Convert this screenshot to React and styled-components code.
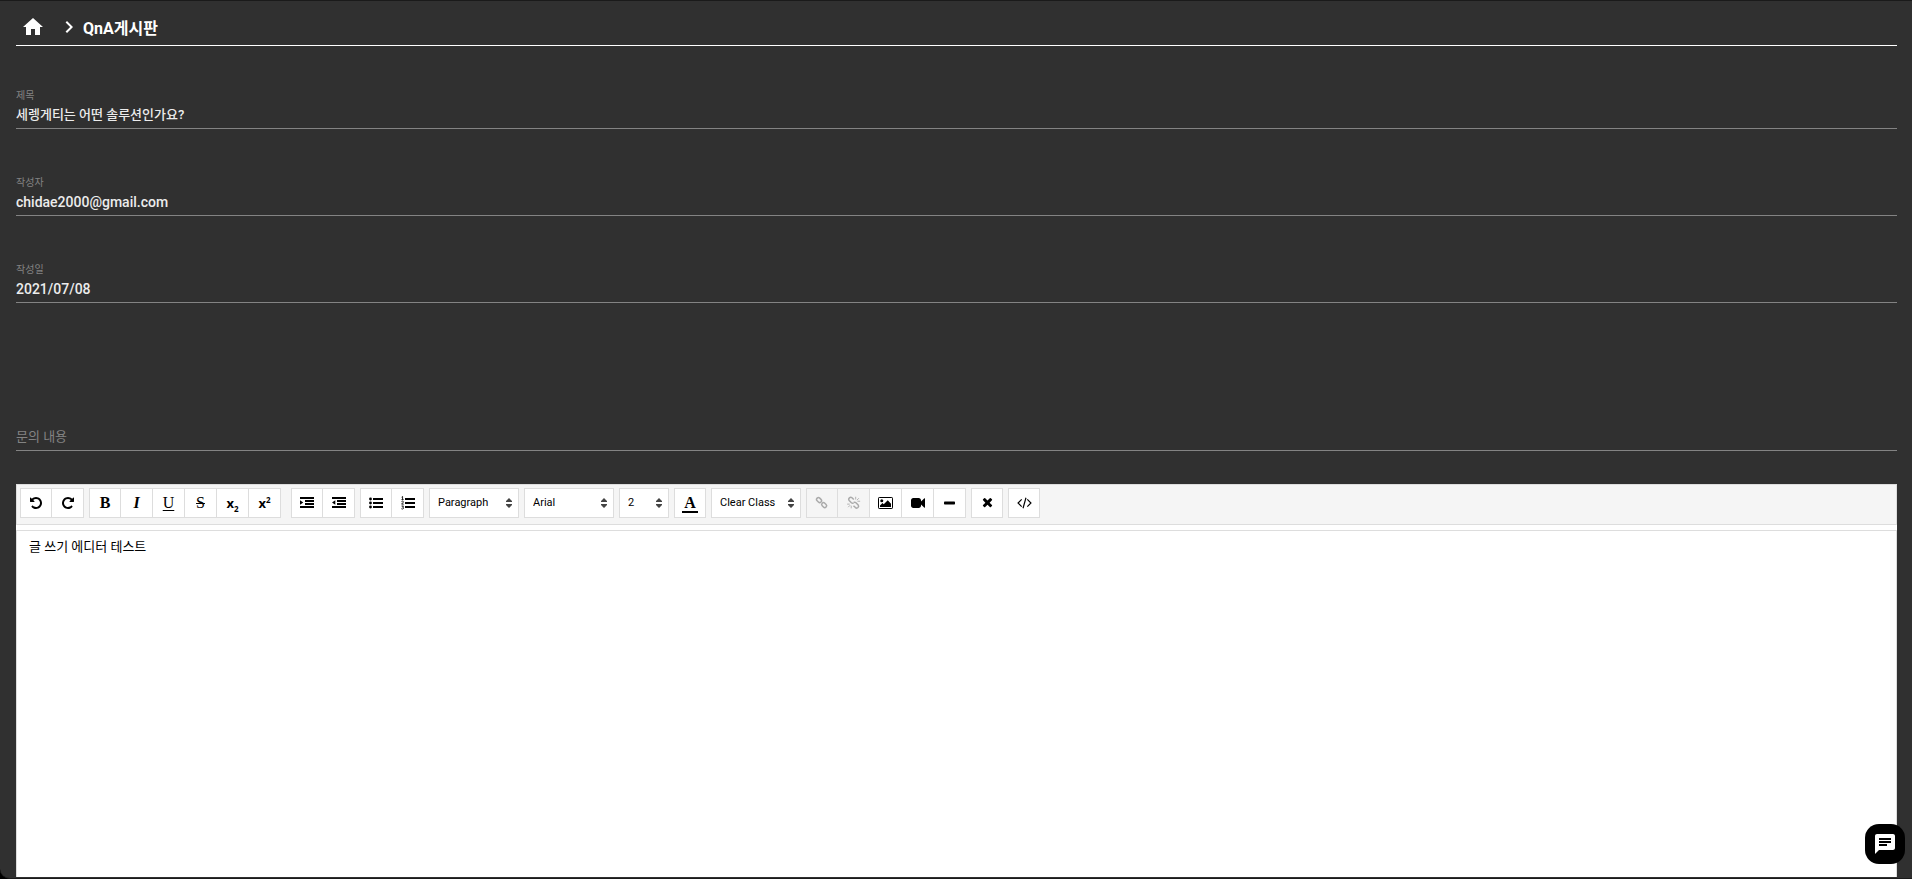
import React from 'react';
import styled, { createGlobalStyle } from 'styled-components';
import { MdHome, MdChevronRight, MdChat } from 'react-icons/md';

const GlobalStyle = createGlobalStyle`
    * {
        box-sizing: border-box;
    }

    html {
        background: #000;
    }

    body {
        margin: 0;
        font-family: Roboto, 'Noto Sans CJK KR', sans-serif;
        font-size: 14px;
        color: #fff;
    }

    button, input, select, textarea {
        font-family: inherit;
    }
`;

const Page = styled.main`
    display: flex;
    flex-direction: column;
    height: 100vh;
    padding: 0 15px 1px 16px;
    border-top: 1px solid #1a1a1a;
    border-bottom: 1px solid #1a1a1a;
    border-radius: 0 0 0 10px;
    background: #303030;
    overflow: hidden;
`;

const Breadcrumb = styled.nav`
    display: flex;
    align-items: center;
    height: 45px;
    padding: 8px 0 0 5px;
    border-bottom: 1px solid #fff;

    a {
        display: flex;
        margin-right: 12px;
        color: #fff;
    }

    h1 {
        margin: 0 0 0 2px;
        font-size: 16px;
        font-weight: 700;
    }
`;

const Fields = styled.form`
    display: flex;
    flex-direction: column;
    gap: 31px;
    padding-top: 27px;
`;

const Field = styled.div`
    display: flex;
    flex-direction: column;
    height: 56px;
    padding-top: 14px;
    border-bottom: 1px solid #838383;

    label {
        font-size: 10px;
        line-height: 18px;
        color: #838383;
    }

    input {
        width: 100%;
        height: ${props => props.$korean ? '16px' : '20px'};
        padding: 0;
        border: 0;
        outline: 0;
        background: transparent;
        font-size: ${props => props.$korean ? '13px' : '14px'};
        font-weight: 500;
        color: #ececec;
    }
`;

const ContentLabel = styled.label`
    height: 27px;
    margin-top: 121px;
    border-bottom: 1px solid #838383;
    font-size: 13px;
    line-height: 26px;
    color: #838383;
`;

const Editor = styled.section`
    display: flex;
    flex: 1;
    flex-direction: column;
    gap: 5px;
    margin-top: 33px;
    background: #fff;
`;

const Toolbar = styled.div`
    display: flex;
    flex-wrap: wrap;
    gap: 5px;
    padding: 3px 3px 6px;
    border: 1px solid #ddd;
    background: #f5f5f5;
`;

const Group = styled.div`
    display: flex;
    margin-left: ${props => props.$spaced ? '5px' : '0'};
`;

const ToolButton = styled.button`
    display: flex;
    align-items: center;
    justify-content: center;
    width: 32px;
    height: 30px;
    padding: 0;
    border: 1px solid #ddd;
    background: #fff;
    color: #000;

    & + & {
        border-left: 0;
    }

    &:disabled {
        background: #f5f5f5;
        color: #aaa;
    }
`;

const Letter = styled.span`
    font-family: 'Liberation Serif', serif;
    font-size: 16px;
    line-height: 16px;
    font-weight: ${props => props.$weight || 700};
    font-style: ${props => props.$italic ? 'italic' : 'normal'};
    text-decoration: ${props => props.$line || 'none'};
    text-underline-offset: 2px;
`;

const ColorLetter = styled(Letter)`
    padding: 2px 2px 0;
    border-bottom: 2px solid #000;
`;

const Script = styled.span`
    font-family: 'Open Sans', sans-serif;
    font-size: 13px;
    font-weight: 700;
    line-height: 16px;

    sub, sup {
        font-size: 8px;
        line-height: 0;
    }
`;

const SelectBox = styled.div`
    display: grid;
    align-items: center;
    width: ${props => props.$small ? '50px' : '90px'};
    height: 30px;
    border: 1px solid #ddd;
    background: #fff;
    color: #444;

    select, svg {
        grid-area: 1 / 1;
    }

    svg {
        justify-self: end;
        margin-right: 6px;
        pointer-events: none;
    }

    select {
        width: 100%;
        height: 28px;
        padding: 0 8px 1px;
        border: 0;
        outline: 0;
        background: transparent;
        appearance: none;
        font-size: 11px;
        color: #000;
    }
`;

const TextArea = styled.textarea`
    flex: 1;
    width: 100%;
    padding: 6px 12px;
    border: 1px solid #ddd;
    border-bottom: 0;
    outline: 0;
    resize: none;
    background: #fff;
    font-size: 13px;
    line-height: 20px;
    color: #000;
`;

const ChatButton = styled.button`
    position: fixed;
    right: 7px;
    bottom: 15px;
    display: flex;
    align-items: center;
    justify-content: center;
    width: 40px;
    height: 40px;
    padding: 0;
    border: 0;
    border-radius: 14px;
    background: #000;
    color: #fff;
`;

const UNDO = 'M1536 896q0 156-61 298t-164 245-245 164-298 61q-172 0-327-72.5T177 1387q-7-10-6.5-22.5t8.5-20.5l137-138q10-9 25-9 16 2 23 12 73 95 179 147t225 52q104 0 198.5-40.5T1130 1258t109.5-163.5T1280 896t-40.5-198.5T1130 534 966.5 424.5 768 384q-98 0-188 35.5T420 521l137 138q31 30 14 69-17 40-59 40H64q-26 0-45-19T0 704V256q0-42 40-59 39-17 69 14l130 129q107-101 244.5-156.5T768 128q156 0 298 61t245 164 164 245 61 298z';
const VIDEO = 'M1792 352v1088q0 42-39 59-13 5-25 5-27 0-45-19l-403-403v166q0 119-84.5 203.5T992 1536H288q-119 0-203.5-84.5T0 1248V544q0-119 84.5-203.5T288 256h704q119 0 203.5 84.5T1280 544v165l403-402q18-19 45-19 12 0 25 5 39 17 39 59z';
const TIMES = 'M1298 1214q0 40-28 68l-136 136q-28 28-68 28t-68-28l-294-294-294 294q-28 28-68 28t-68-28l-136-136q-28-28-28-68t28-68l294-294-294-294q-28-28-28-68t28-68l136-136q28-28 68-28t68 28l294 294 294-294q28-28 68-28t68 28l136 136q28 28 28 68t-28 68l-294 294 294 294q28 28 28 68z';
const BARS = 'M0 1280h1792v256H0zM640 896h1152v256H640zM640 512h1152v256H640zM0 128h1792v256H0z';
const LIST = 'M512 1280h1280v256H512zM512 768h1280v256H512zM512 256h1280v256H512z';

const Icon = ({ width = 1792, children }) => (
    <svg width={width / 128} height="14" viewBox={`0 0 ${width} 1792`} fill="currentColor" aria-hidden="true">
        {children}
    </svg>
);

const Links = () => (
    <g fill="none" stroke="currentColor" strokeWidth="190">
        <rect x="-350" y="-235" width="700" height="470" rx="235" transform="translate(520 520) rotate(45)" />
        <rect x="-350" y="-235" width="700" height="470" rx="235" transform="translate(1170 1170) rotate(45)" />
    </g>
);

const Broken = () => (
    <g fill="none" stroke="currentColor" strokeWidth="190">
        <path d="M870 460L640 230Q470 90 310 240Q140 400 280 580L560 860Q700 980 850 880" />
        <path d="M830 1240L1080 1480Q1250 1620 1400 1480Q1570 1310 1430 1140L1150 860Q1010 750 850 830" />
        <path strokeWidth="110" d="M400 1180L150 1430M540 1240V1580M350 1040H20M1270 530L1520 280M1110 450V100M1330 670H1680" />
    </g>
);

const Carets = () => (
    <svg width="6" height="10" viewBox="0 0 6 10" fill="currentColor" aria-hidden="true">
        <path d="M3 0L6 3V4H0V3zM3 10L0 7V6H6V7z" />
    </svg>
);

const Select = ({ label, value, small }) => (
    <SelectBox $small={small}>
        <select aria-label={label} defaultValue={value}>
            <option>{value}</option>
        </select>
        <Carets />
    </SelectBox>
);

const Tool = ({ title, disabled, children }) => (
    <ToolButton type="button" title={title} aria-label={title} disabled={disabled}>
        {children}
    </ToolButton>
);

const fields = [
    { id: 'title', label: '제목', value: '세렝게티는 어떤 솔루션인가요?', korean: true },
    { id: 'writer', label: '작성자', value: 'chidae2000@gmail.com' },
    { id: 'date', label: '작성일', value: '2021/07/08' },
];

const EditorToolbar = () => (
    <Toolbar>
        <Group>
            <Tool title="Undo"><Icon width={1536}><path d={UNDO} /></Icon></Tool>
            <Tool title="Redo">
                <Icon width={1536}><path d={UNDO} transform="translate(1536 0) scale(-1 1)" /></Icon>
            </Tool>
        </Group>
        <Group>
            <Tool title="Bold"><Letter>B</Letter></Tool>
            <Tool title="Italic"><Letter $italic>I</Letter></Tool>
            <Tool title="Underline"><Letter $weight={400} $line="underline">U</Letter></Tool>
            <Tool title="Strikethrough"><Letter $weight={400} $line="line-through">S</Letter></Tool>
            <Tool title="Subscript"><Script>x<sub>2</sub></Script></Tool>
            <Tool title="Superscript"><Script>x<sup>2</sup></Script></Tool>
        </Group>
        <Group $spaced>
            <Tool title="Indent">
                <Icon><path d={BARS} /><path d="M0 544L420 832L0 1120z" /></Icon>
            </Tool>
            <Tool title="Outdent">
                <Icon><path d={BARS} /><path d="M420 544L0 832L420 1120z" /></Icon>
            </Tool>
        </Group>
        <Group>
            <Tool title="Unordered List">
                <Icon>
                    <path d={LIST} />
                    <circle cx="192" cy="384" r="180" />
                    <circle cx="192" cy="896" r="180" />
                    <circle cx="192" cy="1408" r="180" />
                </Icon>
            </Tool>
            <Tool title="Ordered List">
                <Icon>
                    <path d={LIST} />
                    <path
                        fill="none"
                        stroke="currentColor"
                        strokeWidth="110"
                        d="M80 150L200 60V460M60 460H340M60 720Q190 600 290 700Q340 790 200 890L80 1040H350M70 1280H320L200 1430Q350 1440 320 1590Q230 1720 50 1630"
                    />
                </Icon>
            </Tool>
        </Group>
        <Select label="Heading" value="Paragraph" />
        <Select label="Font" value="Arial" />
        <Select label="Font Size" value="2" small />
        <Group>
            <Tool title="Text Color"><ColorLetter>A</ColorLetter></Tool>
        </Group>
        <Select label="Custom Class" value="Clear Class" />
        <Group>
            <Tool title="Insert Link" disabled><Icon><Links /></Icon></Tool>
            <Tool title="Unlink" disabled><Icon><Broken /></Icon></Tool>
            <Tool title="Insert Image">
                <Icon width={1920}>
                    <rect x="64" y="192" width="1792" height="1408" rx="90" fill="none" stroke="currentColor" strokeWidth="128" />
                    <circle cx="480" cy="608" r="192" />
                    <path d="M1664 992v416H256v-192l320-320 160 160 512-512z" />
                </Icon>
            </Tool>
            <Tool title="Insert Video"><Icon><path d={VIDEO} /></Icon></Tool>
            <Tool title="Horizontal Line">
                <Icon width={1408}><rect y="704" width="1408" height="384" rx="96" /></Icon>
            </Tool>
        </Group>
        <Group>
            <Tool title="Clear Formatting"><Icon width={1408}><path d={TIMES} /></Icon></Tool>
        </Group>
        <Group>
            <Tool title="HTML Code">
                <Icon width={1920}>
                    <path
                        fill="none"
                        stroke="currentColor"
                        strokeWidth="150"
                        d="M600 430L134 896L600 1362M1320 430L1786 896L1320 1362M1150 220L770 1572"
                    />
                </Icon>
            </Tool>
        </Group>
    </Toolbar>
);

export default function App() {
    return (
        <>
            <GlobalStyle />
            <Page>
                <Breadcrumb>
                    <a href="#home" aria-label="Home"><MdHome size={24} /></a>
                    <MdChevronRight size={24} />
                    <h1>QnA게시판</h1>
                </Breadcrumb>
                <Fields>
                    {fields.map(({ id, label, value, korean }) => (
                        <Field key={id} $korean={korean}>
                            <label htmlFor={id}>{label}</label>
                            <input id={id} defaultValue={value} readOnly />
                        </Field>
                    ))}
                </Fields>
                <ContentLabel htmlFor="content">문의 내용</ContentLabel>
                <Editor>
                    <EditorToolbar />
                    <TextArea id="content" defaultValue="글 쓰기 에디터 테스트" />
                </Editor>
            </Page>
            <ChatButton type="button" aria-label="Chat"><MdChat size={24} /></ChatButton>
        </>
    );
}
